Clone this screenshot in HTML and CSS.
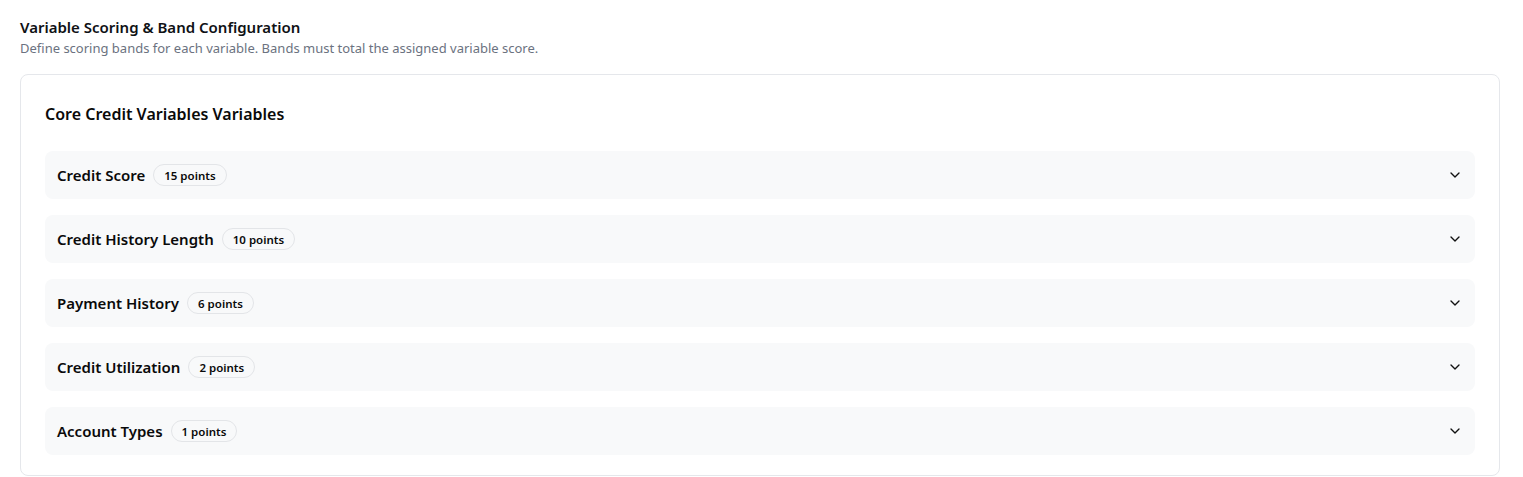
FILE: index.html
```html
<!DOCTYPE html>
<html lang="en">
<head>
<meta charset="utf-8">
<title>Variable Scoring &amp; Band Configuration</title>
<link rel="stylesheet" href="styles.css">
</head>
<body>
<div class="page">
  <header class="page-header">
    <h1 class="page-title">Variable Scoring &amp; Band Configuration</h1>
    <p class="page-subtitle">Define scoring bands for each variable. Bands must total the assigned variable score.</p>
  </header>
  <section class="card">
    <h2 class="card-title">Core Credit Variables Variables</h2>
    <div class="var-list">
      <div class="var-item">
        <div class="var-left"><span class="var-name">Credit Score</span><span class="badge">15 points</span></div>
        <svg class="chevron" viewBox="0 0 24 24" width="16" height="16" fill="none" stroke="currentColor" stroke-width="2" stroke-linecap="round" stroke-linejoin="round"><path d="m6 9 6 6 6-6"/></svg>
      </div>
      <div class="var-item">
        <div class="var-left"><span class="var-name">Credit History Length</span><span class="badge">10 points</span></div>
        <svg class="chevron" viewBox="0 0 24 24" width="16" height="16" fill="none" stroke="currentColor" stroke-width="2" stroke-linecap="round" stroke-linejoin="round"><path d="m6 9 6 6 6-6"/></svg>
      </div>
      <div class="var-item">
        <div class="var-left"><span class="var-name">Payment History</span><span class="badge">6 points</span></div>
        <svg class="chevron" viewBox="0 0 24 24" width="16" height="16" fill="none" stroke="currentColor" stroke-width="2" stroke-linecap="round" stroke-linejoin="round"><path d="m6 9 6 6 6-6"/></svg>
      </div>
      <div class="var-item">
        <div class="var-left"><span class="var-name">Credit Utilization</span><span class="badge">2 points</span></div>
        <svg class="chevron" viewBox="0 0 24 24" width="16" height="16" fill="none" stroke="currentColor" stroke-width="2" stroke-linecap="round" stroke-linejoin="round"><path d="m6 9 6 6 6-6"/></svg>
      </div>
      <div class="var-item">
        <div class="var-left"><span class="var-name">Account Types</span><span class="badge">1 points</span></div>
        <svg class="chevron" viewBox="0 0 24 24" width="16" height="16" fill="none" stroke="currentColor" stroke-width="2" stroke-linecap="round" stroke-linejoin="round"><path d="m6 9 6 6 6-6"/></svg>
      </div>
    </div>
  </section>
</div>
</body>
</html>
```

FILE: styles.css
```css
* { box-sizing: border-box; }
html, body { margin: 0; padding: 0; background: #ffffff; }
body {
  font-family: "Noto Sans", "Open Sans", "Liberation Sans", sans-serif;
  color: #111827;
}
.page {
  padding: 16px 23px 0 20px;
}
.page-header {
  margin-bottom: 16px;
}
.page-title {
  margin: 0;
  font-size: 15px;
  line-height: 22px;
  font-weight: 600;
  color: #0f1115;
}
.page-subtitle {
  margin: 0;
  font-size: 13px;
  line-height: 20px;
  color: #6b7280;
}
.card {
  border: 1px solid #e5e7eb;
  border-radius: 8px;
  padding: 24px 24px 20px;
  background: #fff;
}
.card-title {
  margin: 2px 0 24px;
  font-size: 16px;
  line-height: 26px;
  font-weight: 600;
  color: #0a0a0a;
}
.var-list {
  display: flex;
  flex-direction: column;
  gap: 16px;
}
.var-item {
  display: flex;
  align-items: center;
  justify-content: space-between;
  height: 48px;
  padding: 0 12px;
  background: #f8f9fa;
  border-radius: 8px;
}
.var-left {
  display: flex;
  align-items: center;
  gap: 8px;
}
.var-name {
  font-size: 15px;
  font-weight: 600;
  color: #0a0a0a;
}
.badge {
  display: inline-flex;
  align-items: center;
  height: 22px;
  padding: 0 10px;
  border: 1px solid #e3e5e8;
  border-radius: 999px;
  font-size: 11.5px;
  font-weight: 600;
  color: #0a0a0a;
  background: #f8f9fa;
}
.chevron {
  color: #111;
  flex: none;
}
```
